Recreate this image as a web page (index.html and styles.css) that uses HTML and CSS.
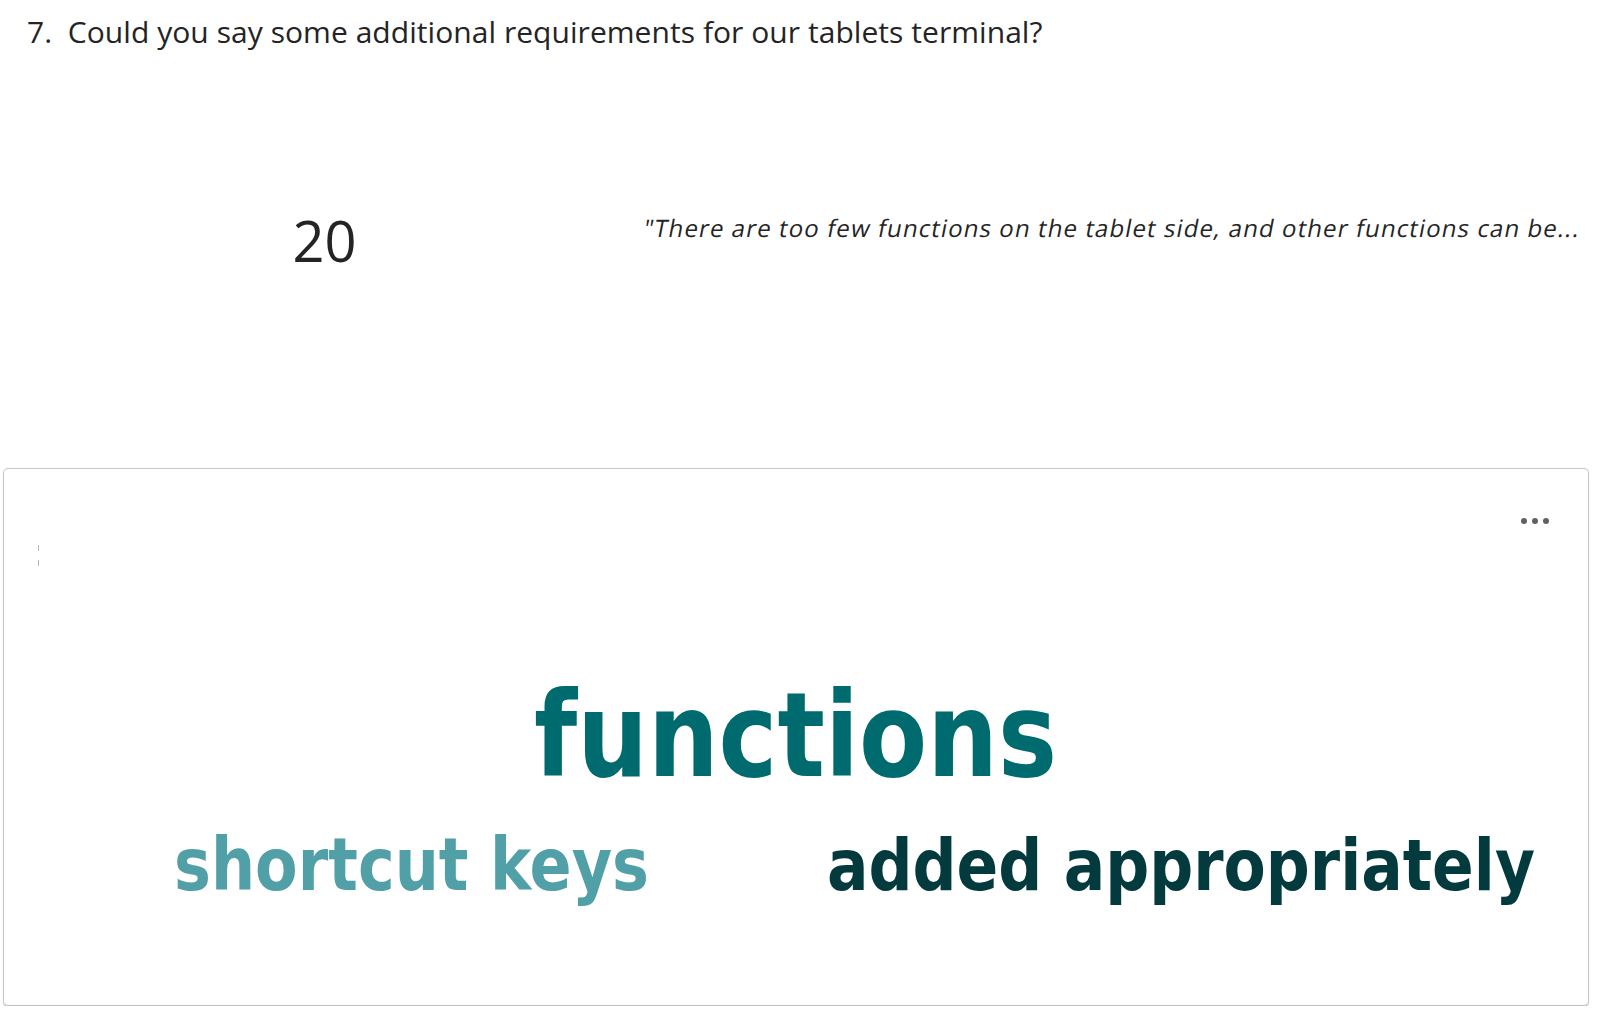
FILE: index.html
```html
<!DOCTYPE html>
<html lang="en">
<head>
<meta charset="utf-8">
<title>Question 7 summary</title>
<link rel="stylesheet" href="styles.css">
</head>
<body>
<div class="question">7.&nbsp; Could you say some additional requirements for our tablets terminal?</div>
<div class="summary">
  <div class="count">20</div>
  <div class="quote"><span class="quote-text">"There are too few functions on the tablet side, and other functions can be...</span></div>
</div>
<div class="card">
  <div class="card-head">
    <div class="more"><span class="dot"></span><span class="dot"></span><span class="dot"></span></div>
  </div>
  <div class="ticks"><span class="tick"></span><span class="tick"></span></div>
  <svg class="cloud" width="1584" height="439" viewBox="4 566 1584 439" xmlns="http://www.w3.org/2000/svg">
    <text class="w w1" x="534" y="776" textLength="523" lengthAdjust="spacingAndGlyphs">functions</text>
    <text class="w w2" x="174" y="890" textLength="475" lengthAdjust="spacingAndGlyphs">shortcut keys</text>
    <text class="w w3" x="827" y="890" textLength="708" lengthAdjust="spacingAndGlyphs">added appropriately</text>
  </svg>
</div>
</body>
</html>
```
FILE: styles.css
```css
* { box-sizing: border-box; }
html, body { margin: 0; padding: 0; background: #ffffff; }
body {
  font-family: "Open Sans", "Noto Sans", "DejaVu Sans", sans-serif;
  color: #242424;
  width: 1614px;
}
.question {
  padding: 10px 0 0 27px;
  font-size: 30px;
  line-height: 44px;
  height: 54px;
  white-space: nowrap;
  letter-spacing: 0.05px;
}
.summary {
  display: flex;
  align-items: flex-start;
  height: 414px;
  padding-top: 148px;
}
.count {
  width: 645px;
  flex: none;
  text-align: center;
  font-size: 56px;
  line-height: normal;
  padding-left: 4px;
}
.quote {
  margin: 9px 0 0 -4px;
  font-size: 24px;
  letter-spacing: 1.1px;
  line-height: normal;
  white-space: nowrap;
}
.quote-text {
  display: inline-block;
  transform: skewX(-11deg);
  transform-origin: 0 100%;
}
.card {
  margin-left: 3px;
  width: 1586px;
  height: 538px;
  border: 1px solid #c8c8c8;
  border-bottom-color: #bdbdbd;
  border-radius: 5px;
  box-shadow: 0 1px 0 #c4c4c4, 0 2px 2px rgba(0, 0, 0, 0.08);
  display: flex;
  flex-direction: column;
  overflow: hidden;
}
.card-head {
  height: 60px;
  display: flex;
  justify-content: flex-end;
  align-items: flex-start;
  padding: 49px 39px 0 0;
}
.more { display: flex; gap: 5px; }
.dot {
  width: 6px;
  height: 6px;
  border-radius: 50%;
  background: #616161;
}
.ticks {
  margin: 16px 0 0 34px;
  display: flex;
  flex-direction: column;
  gap: 9px;
  height: 21px;
}
.tick {
  width: 1px;
  height: 6px;
  background: #b4b4b4;
}
.cloud { display: block; flex: none; }
.w {
  font-family: "DejaVu Sans", "Verdana", sans-serif;
  font-weight: bold;
}
.w1 { font-size: 117px; fill: #006b6e; }
.w2 { font-size: 73px; fill: #52a0a7; }
.w3 { font-size: 72px; fill: #033a3d; }
```
